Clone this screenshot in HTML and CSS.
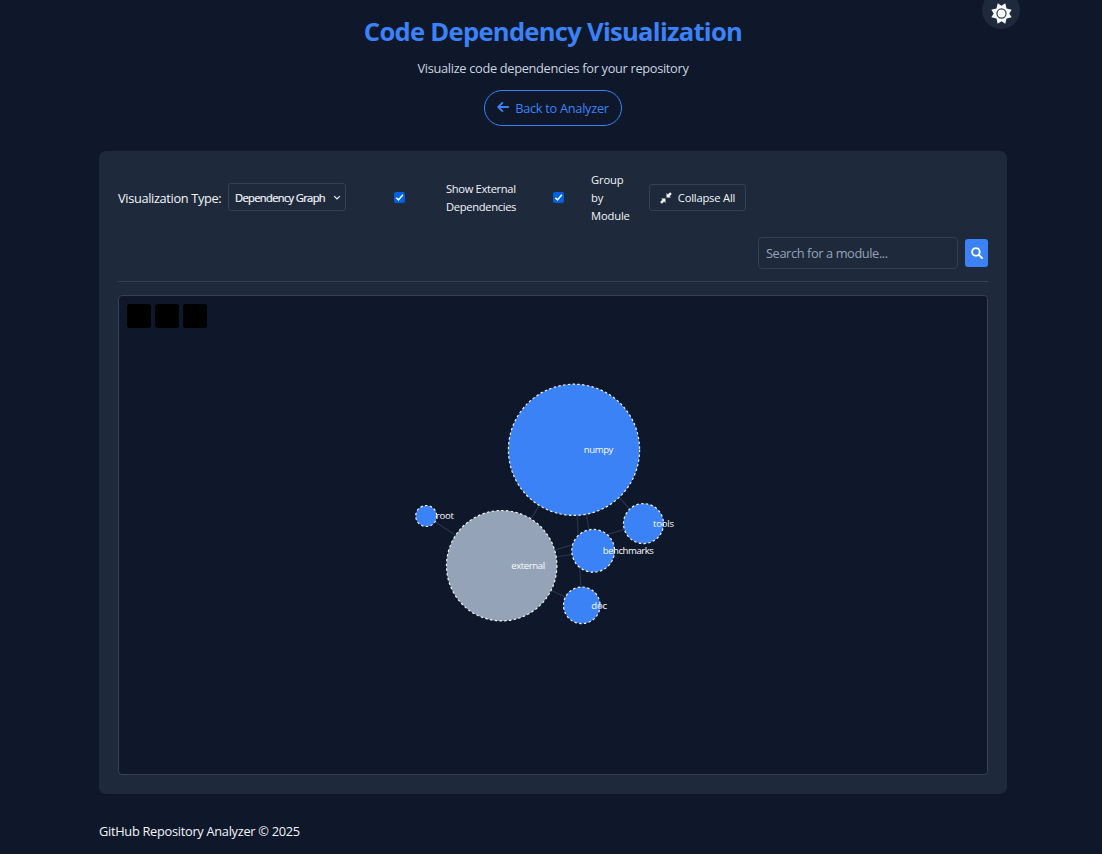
FILE: index.html
```
<!DOCTYPE html>
<html lang="en">
<head>
<meta charset="utf-8">
<title>Code Dependency Visualization</title>
<link rel="stylesheet" href="styles.css">
</head>
<body>
<button class="theme-toggle" aria-label="Toggle theme">
  <svg width="21" height="21" viewBox="0 0 20 20"><path class="fill" d="M10 2.600 13.600.3 14.800 5.200 19.700 6.400 17.400 10 19.700 13.600 14.800 14.800 13.600 19.700 10 17.400 6.400 19.700 5.200 14.800.3 13.600 2.600 10 .3 6.400 5.200 5.200 6.400.3Z"/><circle class="sun-ring" cx="10" cy="10" r="4.300"/></svg>
</button>
<div class="container">
  <header class="header">
    <h1 class="title"><span>Code Dependency Visualization</span></h1>
    <p class="subtitle">Visualize code dependencies for your repository</p>
    <a class="back"><svg width="12" height="12" viewBox="0 0 12 12"><path class="line" d="M11.200 6H1.500M5.400 1.800 1.200 6l4.200 4.200"/></svg><span>Back to Analyzer</span></a>
  </header>
  <main class="card">
    <div class="toolbar">
      <div class="controls">
        <label class="type-label" for="type">Visualization Type:</label>
        <div class="select" id="type"><span>Dependency Graph</span><svg width="8" height="6" viewBox="0 0 8 6"><path class="chevron" d="M1.200 1.200 4 4l2.800-2.800"/></svg></div>
        <div class="check check-external"><span class="box"><svg width="11" height="11" viewBox="0 0 11 11"><path class="tick" d="M2.300 5.700 4.500 7.900 8.900 2.800"/></svg></span><span class="check-text">Show External<br>Dependencies</span></div>
        <div class="check check-group"><span class="box"><svg width="11" height="11" viewBox="0 0 11 11"><path class="tick" d="M2.300 5.700 4.500 7.900 8.900 2.800"/></svg></span><span class="check-text">Group<br>by<br>Module</span></div>
        <button class="collapse"><svg width="12" height="12" viewBox="0 0 12 12"><path class="fill" d="M6.500 5.500V1.100l1.300 1.300L10.100.2l1.700 1.700L9.600 4.200l1.300 1.300ZM5.500 6.500v4.400L4.200 9.600 1.900 11.800.2 10.100 2.400 7.800 1.100 6.500Z"/></svg><span>Collapse All</span></button>
      </div>
      <div class="search">
        <div class="search-input"><span>Search for a module...</span></div>
        <button class="search-button" aria-label="Search"><svg width="12" height="12" viewBox="0 0 12 12"><circle class="lens" cx="4.900" cy="4.900" r="3.800"/><path class="lens" d="m7.800 7.800 3.300 3.300"/></svg></button>
      </div>
    </div>
    <div class="graph">
      <div class="zoom-controls"><span></span><span></span><span></span></div>
      <svg class="canvas" width="868" height="478" viewBox="119 296 868 478">
        <g class="edges">
          <path d="M574 450 501.700 565.700M426.200 516 501.700 565.700M574 450l19.200 101M574 450l69.500 73.500M574 450l7.700 155M501.700 565.700l142-42M501.700 565.700 593 551M501.700 565.700l80 39.600"/>
        </g>
        <g class="nodes">
          <circle cx="574" cy="449.800" r="65.600"/>
          <circle class="external" cx="501.700" cy="565.700" r="55.200"/>
          <circle cx="426.200" cy="516" r="10.500"/>
          <circle cx="593.200" cy="550.800" r="21.400"/>
          <circle cx="643.500" cy="523.600" r="20"/>
          <circle cx="581.800" cy="605.300" r="18.300"/>
        </g>
        <g class="labels">
          <text x="583.800" y="453" textLength="29.600">numpy</text>
          <text x="511.200" y="569" textLength="34">external</text>
          <text x="435.800" y="519" textLength="18">root</text>
          <text x="602.800" y="554" textLength="51">benchmarks</text>
          <text x="653" y="527" textLength="21">tools</text>
          <text x="591.200" y="609" textLength="16">doc</text>
        </g>
      </svg>
    </div>
  </main>
  <footer class="footer"><span>GitHub Repository Analyzer © 2025</span></footer>
</div>
</body>
</html>
```
FILE: styles.css
```
* { box-sizing: border-box; }
body {
  margin: 0;
  height: 854px;
  overflow: hidden;
  background: #0f172a;
  color: #f1f5f9;
  font: 12.8px/18px "Open Sans", "Noto Sans", sans-serif;
}
button { font: inherit; color: inherit; margin: 0; }
svg { display: block; flex: none; }
.fill { fill: currentColor; }
.container { width: 908px; margin: 0 0 0 99px; }
.header { height: 151px; padding-top: 14px; display: flex; flex-direction: column; align-items: center; }
.title { margin: 0; font-size: 25.6px; line-height: 36px; font-weight: 700; color: #3b82f6; letter-spacing: -0.73px; white-space: nowrap; }
.subtitle { margin: 8px 0 0; line-height: 20px; color: #cbd5e1; letter-spacing: -0.32px; }
.back {
  margin-top: 12px;
  width: 138px; height: 36px;
  display: flex; align-items: center; justify-content: center; gap: 6px;
  border: 1px solid #3b82f6; border-radius: 18px;
  color: #3b82f6; letter-spacing: -0.3px; white-space: nowrap;
}
.back svg { margin-top: -2px; }
.line { fill: none; stroke: currentColor; stroke-width: 1.8; stroke-linecap: round; stroke-linejoin: round; }
.theme-toggle {
  position: absolute; left: 982px; top: -9px;
  width: 38px; height: 38px; padding: 6px 0 0;
  display: flex; align-items: center; justify-content: center;
  border: 0; border-radius: 50%; background: #1e293b; color: #f8fafc;
}
.sun-ring { fill: #f8fafc; stroke: #334155; stroke-width: 1.2; }
.card { height: 643px; padding: 20px 19px 19px; border-radius: 7px; background: #1e293b; }
.toolbar { height: 111px; border-bottom: 1px solid #334155; white-space: nowrap; }
.controls { height: 54px; display: flex; align-items: center; }
.type-label { width: 110px; letter-spacing: -0.35px; }
.select {
  width: 118px; height: 28px; padding: 2px 4px 0 6px; margin-top: -2px;
  display: flex; align-items: center; justify-content: space-between;
  border: 1px solid #334155; border-radius: 3px;
  font-size: 11.2px; -webkit-text-stroke: .2px currentColor; letter-spacing: -0.68px;
}
.chevron { fill: none; stroke: currentColor; stroke-width: 1.2; }
.check { display: flex; align-items: center; font-size: 11.2px; letter-spacing: -0.34px; }
.check-external { margin-left: 48px; width: 158.5px; gap: 41px; }
.check-group { width: 96.5px; gap: 27.5px; letter-spacing: -0.15px; }
.box { width: 11px; height: 11px; margin-top: -1px; border-radius: 2px; background: #0060df; flex: none; }
.tick { fill: none; stroke: #fff; stroke-width: 1.6; }
.collapse {
  width: 97px; height: 27px; padding: 0; margin-top: -1px;
  display: flex; align-items: center; justify-content: center; gap: 6px;
  border: 1px solid #334155; border-radius: 3px; background: none;
  font-size: 11.2px; letter-spacing: -0.2px;
}
.search { margin-top: 12px; display: flex; align-items: center; justify-content: flex-end; gap: 7px; }
.search-input { width: 200px; height: 32px; padding: 6px 7px; border: 1px solid #334155; border-radius: 4px; color: #94a3b8; letter-spacing: -0.4px; }
.search-button { width: 23px; height: 28px; padding: 0; border: 0; border-radius: 3px; background: #3b82f6; color: #fff; display: flex; align-items: center; justify-content: center; }
.lens { fill: none; stroke: currentColor; stroke-width: 1.9; stroke-linecap: round; }
.graph { position: relative; margin-top: 13px; height: 480px; border: 1px solid #334155; border-radius: 4px; background: #0f172a; }
.zoom-controls { position: absolute; left: 8px; top: 8px; display: flex; gap: 4px; }
.zoom-controls span { width: 24px; height: 24px; border-radius: 3px; background: #000; }
.edges { fill: none; stroke: #334155; stroke-opacity: .7; stroke-width: 1.2; }
.nodes { fill: #3b82f6; stroke: #f1f5f9; stroke-width: 1.2; stroke-dasharray: 2.4 2.4; }
.external { fill: #94a3b8; }
.labels { fill: #f8fafc; font-size: 9.6px; }
.footer { padding-top: 27px; line-height: 20px; letter-spacing: -0.29px; }
```
